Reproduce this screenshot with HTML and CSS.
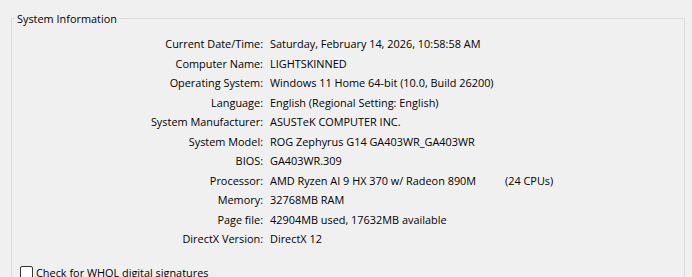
FILE: index.html
```html
<!DOCTYPE html>
<html lang="en">
<head>
  <meta charset="UTF-8">
  <title>System Information</title>
  <link rel="stylesheet" href="styles.css">
</head>
<body>
  <fieldset class="group">
    <legend>System Information</legend>
    <div class="info-grid">
      <div class="label">Current Date/Time:</div><div class="value">Saturday, February 14, 2026, 10:58:58 AM</div>
      <div class="label">Computer Name:</div><div class="value">LIGHTSKINNED</div>
      <div class="label">Operating System:</div><div class="value">Windows 11 Home 64-bit (10.0, Build 26200)</div>
      <div class="label">Language:</div><div class="value">English (Regional Setting: English)</div>
      <div class="label">System Manufacturer:</div><div class="value">ASUSTeK COMPUTER INC.</div>
      <div class="label">System Model:</div><div class="value">ROG Zephyrus G14 GA403WR_GA403WR</div>
      <div class="label">BIOS:</div><div class="value">GA403WR.309</div>
      <div class="label">Processor:</div><div class="value"><span class="cpu-name">AMD Ryzen AI 9 HX 370 w/ Radeon 890M</span>(24 CPUs)</div>
      <div class="label">Memory:</div><div class="value">32768MB RAM</div>
      <div class="label">Page file:</div><div class="value">42904MB used, 17632MB available</div>
      <div class="label">DirectX Version:</div><div class="value">DirectX 12</div>
    </div>
    <label class="check"><span class="box"></span>Check for WHQL digital signatures</label>
  </fieldset>
</body>
</html>
```
FILE: styles.css
```css
body {
  margin: 0;
  background: #f0f0f0;
  font-family: "Open Sans", "Liberation Sans", sans-serif;
  font-size: 10.9px;
  color: #000;
  height: 277px;
  overflow: hidden;
}
.group {
  margin: 11px 7px 0 11px;
  padding: 0 0 20px 0;
  border: 1px solid #dcdcdc;
  min-width: 0;
}
.group legend {
  margin-left: 3px;
  padding: 0 2px;
  line-height: 15px;
}
.info-grid {
  display: grid;
  grid-template-columns: 251px 1fr;
  column-gap: 7px;
  grid-auto-rows: 19.5px;
  align-items: center;
  margin-top: 8px;
}
.label {
  text-align: right;
}
.cpu-name {
  display: inline-block;
  width: 235px;
}
.check {
  display: flex;
  align-items: center;
  gap: 3px;
  margin: 16px 0 0 8px;
}
.box {
  width: 11px;
  height: 11px;
  border: 1px solid #333;
  border-radius: 2px;
  background: #fff;
}
```
